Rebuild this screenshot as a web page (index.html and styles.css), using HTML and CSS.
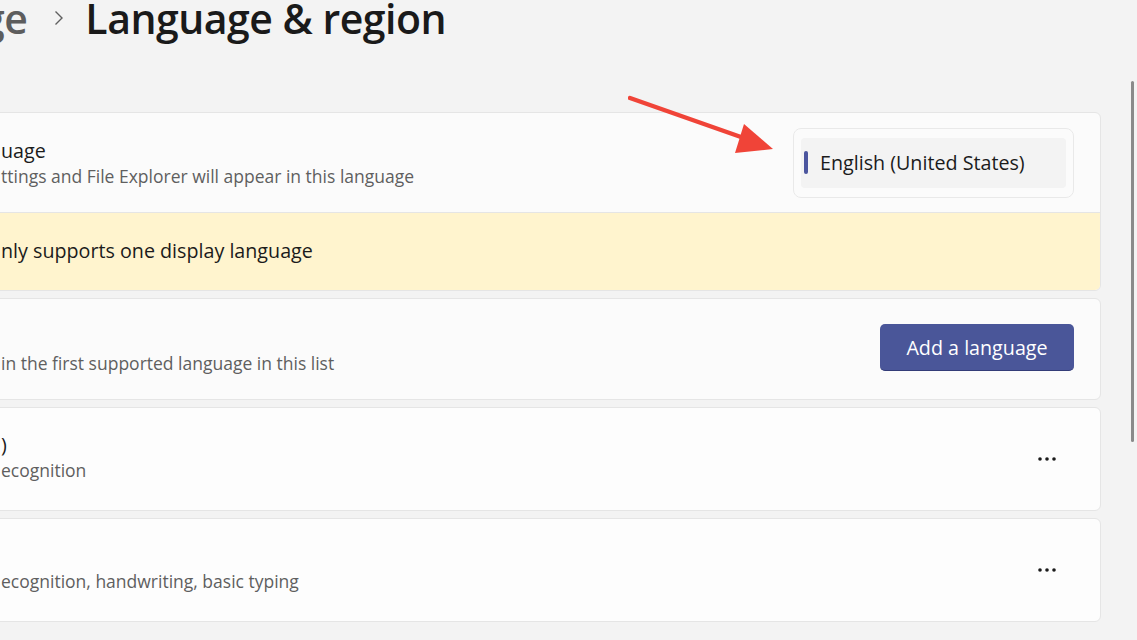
FILE: index.html
```html
<!DOCTYPE html>
<html lang="en">

<head>
  <meta charset="UTF-8" />
  <title>Language &amp; region</title>
  <link rel="stylesheet" href="styles.css">
</head>

<body>
  <div class="page">
    <div class="header">
      <span class="crumb">ge</span>
      <svg class="chevron" width="12" height="16" viewBox="0 0 12 16">
        <path d="M2.5 1.5 L9 8 L2.5 14.5" fill="none" stroke="#5f5f5f" stroke-width="1.4" />
      </svg>
      <h1 class="title">Language &amp; region</h1>
    </div>

    <div class="cards">
      <!-- display language -->
      <div class="card">
        <div class="row row-top">
          <div class="text">
            <div class="row-title">uage</div>
            <div class="row-sub">ttings and File Explorer will appear in this language</div>
          </div>
          <div class="dropdown">
            <div class="dropdown-item">
              <span class="accent"></span>
              <span>English (United States)</span>
            </div>
          </div>
        </div>
        <div class="banner">nly supports one display language</div>
      </div>

      <!-- preferred languages -->
      <div class="card">
        <div class="row">
          <div class="text">
            <div class="row-title"></div>
            <div class="row-sub">in the first supported language in this list</div>
          </div>
          <button class="add-btn">Add a language</button>
        </div>
      </div>

      <div class="card card-white">
        <div class="row row-lang">
          <div class="text">
            <div class="row-title">)</div>
            <div class="row-sub">ecognition</div>
          </div>
          <svg class="more" width="20" height="6" viewBox="0 0 20 6">
            <circle cx="3" cy="3" r="1.8" fill="#1b1b1b" />
            <circle cx="10" cy="3" r="1.8" fill="#1b1b1b" />
            <circle cx="17" cy="3" r="1.8" fill="#1b1b1b" />
          </svg>
        </div>
      </div>

      <div class="card card-white">
        <div class="row row-lang">
          <div class="text">
            <div class="row-title"></div>
            <div class="row-sub">ecognition, handwriting, basic typing</div>
          </div>
          <svg class="more" width="20" height="6" viewBox="0 0 20 6">
            <circle cx="3" cy="3" r="1.8" fill="#1b1b1b" />
            <circle cx="10" cy="3" r="1.8" fill="#1b1b1b" />
            <circle cx="17" cy="3" r="1.8" fill="#1b1b1b" />
          </svg>
        </div>
      </div>
    </div>

    <svg class="arrow" width="170" height="80" viewBox="0 0 170 80">
      <line x1="2" y1="12" x2="130" y2="57" stroke="#f04438" stroke-width="4.5" stroke-linecap="round" />
      <polygon points="116,38 145,63 107,67" fill="#f04438" />
    </svg>

    <div class="scrollbar"></div>
  </div>
</body>

</html>
```

FILE: styles.css
```css
body {
  margin: 0;
  background-color: #f3f3f3;
  font-family: "Open Sans", "Noto Sans", sans-serif;
  color: #1b1b1b;
  overflow: hidden;
}

.page {
  position: relative;
  height: 640px;
  margin-left: -20px;
  padding-right: 36px;
}

.header {
  display: flex;
  align-items: center;
  height: 44px;
  margin-top: -4px;
  padding-left: 2px;
}

.crumb {
  font-size: 41px;
  font-weight: 600;
  color: #5d5d5d;
  letter-spacing: -0.5px;
}

.chevron {
  margin: 0 20px 0 26px;
}

.title {
  margin: 0;
  font-size: 41px;
  font-weight: 600;
  color: #1a1a1a;
  letter-spacing: -0.5px;
}

.cards {
  display: flex;
  flex-direction: column;
  gap: 7px;
  margin-top: 72px;
}

.card {
  background-color: #fbfbfb;
  border: 1px solid #e5e5e5;
  border-radius: 6px;
  overflow: hidden;
}

.card-white {
  background-color: #fdfdfd;
}

.row {
  display: flex;
  align-items: center;
  justify-content: space-between;
  height: 100px;
  padding: 0 26px 0 20px;
}

.row-top {
  height: 99px;
  border-bottom: 1px solid #e5e5e5;
}

.row-lang {
  height: 102px;
}

.row-lang .text {
  margin-bottom: 6px;
}

.row-title {
  font-size: 19.7px;
  line-height: 27px;
  min-height: 27px;
}

.row-sub {
  font-size: 17.5px;
  line-height: 24px;
  color: #5f5f5f;
}

.dropdown {
  width: 265px;
  padding: 9px 7px;
  background-color: #fbfbfb;
  border: 1px solid #e9e9e9;
  border-radius: 8px;
}

.dropdown-item {
  display: flex;
  align-items: center;
  gap: 12px;
  height: 50px;
  padding-left: 3px;
  background-color: #f3f3f3;
  border-radius: 4px;
  font-size: 19.7px;
}

.accent {
  width: 4px;
  height: 23px;
  border-radius: 2px;
  background-color: #4b559e;
}

.banner {
  height: 77px;
  display: flex;
  align-items: center;
  padding-left: 20px;
  padding-bottom: 2px;
  box-sizing: border-box;
  background-color: #fff4ce;
  font-size: 19.7px;
}

.add-btn {
  width: 194px;
  height: 47px;
  border: none;
  border-bottom: 1px solid #333c78;
  border-radius: 5px;
  background-color: #4a5699;
  color: #ffffff;
  font-family: inherit;
  font-size: 19.7px;
  margin-top: -3px;
}

.more {
  margin-right: 17px;
}

.arrow {
  position: absolute;
  left: 648px;
  top: 90px;
}

.scrollbar {
  position: absolute;
  left: 1151px;
  top: 85px;
  width: 3px;
  height: 361px;
  border-radius: 2px;
  background-color: #8a8a8a;
}
```
